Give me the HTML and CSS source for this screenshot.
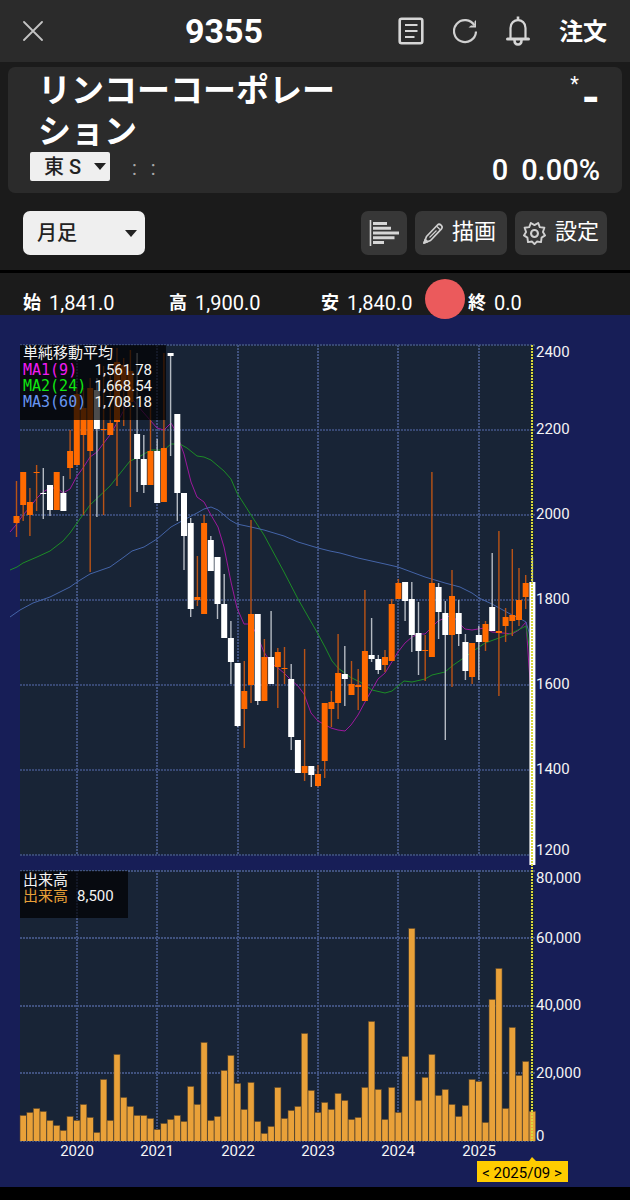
FILE: index.html
```html
<!DOCTYPE html>
<html lang="ja">
<head>
<meta charset="utf-8">
<meta name="viewport" content="width=device-width, initial-scale=1">
<title>9355 リンコーコーポレーション</title>
<link rel="stylesheet" href="styles.css">
</head>
<body>
<header class="topbar">
  <button class="icon-btn" aria-label="閉じる">
    <svg width="20" height="20" viewBox="0 0 20 20"><path d="M1 1L19 19M19 1L1 19" fill="none" stroke="#c4c4c4" stroke-width="1.8" stroke-linecap="round"/></svg>
  </button>
  <h1 class="code">9355</h1>
  <nav class="actions">
    <button class="icon-btn" aria-label="メモ">
      <svg width="26" height="28" viewBox="0 0 26 28" fill="none" stroke="#d6d6d6"><rect x="1.7" y="1.7" width="22.6" height="24.6" rx="2" stroke-width="2.6"/><path d="M7 8H19.500M7 14H19.500M7 20H16.500" stroke-width="2.2"/></svg>
    </button>
    <button class="icon-btn" aria-label="更新">
      <svg width="24" height="26" viewBox="1 1 24 24" fill="none" stroke="#d0d0d0"><path d="M22.500 7.500A11 11 0 1 0 24 13.500" stroke-width="2.200"/><path d="M24 2V9.500H16.500L19 7.600H22.500V3.500Z" fill="#d0d0d0" stroke="none"/></svg>
    </button>
    <button class="icon-btn" aria-label="通知">
      <svg width="24" height="30" viewBox="0 0 24 30" fill="none" stroke="#d6d6d6" stroke-width="2.200"><path d="M12 0.500V4" stroke-width="2.600"/><path d="M4.500 22V12C4.500 1.500 19.500 1.500 19.500 12V22"/><path d="M1.500 23H22.500" stroke-width="3" stroke-linecap="round"/><path d="M8.500 24C8.500 30 15.500 30 15.500 24" stroke-width="2.600"/></svg>
    </button>
    <button class="order-btn">注文</button>
  </nav>
</header>

<main>
  <section class="quote">
    <div class="quote-main">
      <h2 class="name">リンコーコーポレーション</h2>
      <p class="price"><sup>*</sup><span>-</span></p>
    </div>
    <div class="quote-sub">
      <label class="market">
        <select aria-label="市場"><option>東 S</option></select>
        <svg class="arrow" viewBox="0 0 12 7"><path d="M0 0H12L6 7Z" fill="#222"/></svg>
      </label>
      <p class="time"><span>:</span><span>:</span></p>
      <p class="change"><span>0</span><span>0.00%</span></p>
    </div>
  </section>

  <div class="toolbar">
    <label class="period">
      <select aria-label="足種"><option>月足</option></select>
      <svg class="arrow" viewBox="0 0 12 7"><path d="M0 0H12L6 7Z" fill="#222"/></svg>
    </label>
    <div class="tools">
      <button class="tool" aria-label="価格帯別出来高">
        <svg width="30" height="26" viewBox="0 0 30 26"><path d="M1.500 0V26" stroke="#d6d6d6" stroke-width="1.600"/><path d="M4 3.500H18M4 8.300H22M4 13H30M4 17.700H25.500M4 22.500H15" stroke="#d6d6d6" stroke-width="3"/></svg>
      </button>
      <button class="tool tool-text">
        <svg width="20" height="21" viewBox="0 0 20 21" fill="none" stroke="#d0d0d0" stroke-width="1.700" stroke-linejoin="round"><path d="M1 20L3.500 13.500L14.500 2C16.500 0 20.500 3 18.500 5.800L7.500 17.500Z"/><path d="M14 3.500L17 6.500M6.500 14.500L13.500 7.500" stroke-width="1.200"/><path d="M1 20L2.300 16.500L4.500 18.700Z" fill="#d0d0d0"/></svg>
        <span>描画</span>
      </button>
      <button class="tool tool-text">
        <svg width="23" height="23" viewBox="0 0 24 24" fill="none" stroke="#d0d0d0" stroke-width="2" stroke-linejoin="round"><path d="M12 3.200L15.800 1L17.500 5.300L22.300 6L20.800 10.400L23 14L19.400 16.300L18.800 21L14.500 20.400L12 23L9.500 20.400L5.200 21L4.600 16.300L1 14L3.200 10.400L1.700 6L6.500 5.300L8.200 1Z"/><circle cx="12" cy="12" r="3.600" stroke-width="2.200"/></svg>
        <span>設定</span>
      </button>
    </div>
  </div>

  <div class="ohlc-bar">
    <dl class="ohlc">
      <div><dt>始</dt><dd>1,841.0</dd></div>
      <div><dt>高</dt><dd>1,900.0</dd></div>
      <div><dt>安</dt><dd>1,840.0</dd></div>
      <div><dt>終</dt><dd>0.0</dd></div>
    </dl>
    <span class="touch"></span>
  </div>

  <svg class="chart" viewBox="0 315 630 872" role="img" aria-label="月足チャート">
    <rect class="panel" x="20" y="345" width="514" height="510"/>
    <rect class="panel" x="20" y="870" width="514" height="271"/>
    <g id="grid"></g>
    <g id="lines"></g>
    <g id="volume"></g>
    <g id="candles"></g>
    <g id="cursor"></g>
    <rect class="legend" x="20" y="345" width="146" height="75"/>
    <rect class="legend" x="20" y="871" width="108" height="47"/>
    <g class="txt">
      <text x="23" y="358">単純移動平均</text>
      <text class="mono ma1t" x="23" y="375">MA1(9)</text><text x="152" y="375" text-anchor="end">1,561.78</text>
      <text class="mono ma2t" x="23" y="391">MA2(24)</text><text x="152" y="391" text-anchor="end">1,668.54</text>
      <text class="mono ma3t" x="23" y="407">MA3(60)</text><text x="152" y="407" text-anchor="end">1,708.18</text>
      <text x="23" y="885">出来高</text>
      <text class="volt" x="23" y="901">出来高</text><text x="77" y="901">8,500</text>
    </g>
    <g class="txt" id="axis"></g>
    <path d="M477 1161H529L532 1157L536 1161H568V1182H477Z" fill="#ffcc00"/>
    <text class="date" x="522" y="1178" text-anchor="middle">&lt; 2025/09 &gt;</text>
  </svg>
</main>
<script src="chart.js"></script>
</body>
</html>
```

FILE: styles.css
```css
* { box-sizing: border-box; }
body {
  margin: 0;
  min-height: 100vh;
  background: #000;
  color: #fff;
  font-family: Roboto, "Noto Sans CJK JP", sans-serif;
}
h1, h2, p, dl, dd { margin: 0; }
button, select { font-family: inherit; color: inherit; border: 0; }
button { padding: 0; background: none; cursor: pointer; }
svg { display: block; }
main { padding-top: 5px; background: #1b1b1b; }

.topbar {
  display: flex;
  align-items: center;
  height: 62px;
  padding: 0 23px;
  background: #2b2b2b;
}
.code {
  flex: 1;
  padding-left: 142px;
  font-size: 34px;
  line-height: 40px;
  font-weight: 700;
}
.actions { display: flex; align-items: center; gap: 29px; }
.order-btn { padding-top: 2px; font-size: 24px; line-height: 32px; font-weight: 700; }

.quote {
  margin: 0 8px;
  padding: 3px 22px 12px;
  border-radius: 7px;
  background: #2b2b2b;
}
.quote-main { display: flex; justify-content: space-between; height: 82px; }
.name {
  max-width: 320px;
  padding-left: 8px;
  font-size: 33px;
  line-height: 41px;
  font-weight: 700;
  word-break: break-all;
}
.price { display: flex; gap: 3px; }
.price sup { font-size: 20px; vertical-align: baseline; line-height: 28px; }
.price span { padding-top: 6px; font-size: 46px; font-weight: 700; line-height: 44px; }
.quote-sub { display: flex; align-items: center; height: 29px; }
.market, .period { position: relative; display: block; }
.market select, .period select {
  appearance: none;
  width: 100%;
  height: 100%;
  background: #efefef;
  color: #222;
  font-weight: 500;
}
.market { width: 80px; height: 29px; }
.market select { padding: 0 0 0 14px; border-radius: 2px; font-size: 20px; }
.arrow { position: absolute; top: 50%; width: 12px; height: 7px; pointer-events: none; }
.market .arrow { right: 4px; margin-top: -4px; }
.time { display: flex; flex: 1; gap: 14px; padding: 2px 0 0 22px; color: #aaa; font-size: 20px; }
.change {
  display: flex;
  gap: 13px;
  padding-top: 6px;
  font-size: 29px;
  line-height: 32px;
  font-weight: 500;
}

.toolbar {
  display: flex;
  justify-content: space-between;
  padding: 18px 23px 15px;
  border-bottom: 3px solid #000;
}
.period { width: 122px; height: 44px; }
.period select { padding: 0 0 0 14px; border-radius: 7px; font-size: 20px; }
.period .arrow { right: 8px; margin-top: -3px; }
.tools { display: flex; gap: 8px; }
.tool {
  display: flex;
  align-items: center;
  gap: 9px;
  height: 44px;
  padding: 0 8px;
  border-radius: 7px;
  background: #373737;
  font-size: 22px;
}
.tool-text { min-width: 92px; }
.tool span { line-height: 30px; padding-bottom: 3px; }

.ohlc-bar { position: relative; }
.ohlc {
  display: grid;
  grid-template-columns: 146fr 152fr 147fr 162fr;
  padding: 18px 0 0 23px;
}
.ohlc div { display: flex; align-items: center; gap: 8px; height: 24px; font-size: 20px; line-height: 24px; }
.ohlc dt { font-size: 18px; font-weight: 700; }
.touch {
  position: absolute;
  left: 425px;
  top: 6px;
  width: 40px;
  height: 40px;
  border-radius: 50%;
  background: #eb5a5c;
}

.chart { width: 100%; height: auto; background: #171e57; }
.panel { fill: #182436; }
.legend { fill: #000; fill-opacity: .7; }
.txt { fill: #f4f4f4; font-size: 15px; }
.mono { font-family: "DejaVu Sans Mono", monospace; }
.ma1t { fill: #f01cf0; }
.ma2t { fill: #10e810; }
.ma3t { fill: #6896f0; }
.volt { fill: #e8a038; }
.date { fill: #000; font-size: 15px; }
.grid-line { stroke: #40527f; stroke-width: 2; stroke-dasharray: 2 1; }
.grid-thin { stroke: #384974; }
.ma { fill: none; stroke-width: 1; }
.ma1 { stroke: #9c189c; }
.ma2 { stroke: #1c8c26; }
.ma3 { stroke: #4464a8; }
.vol { fill: #e9a139; }
.vol-edge { fill: #6d532f; }
.up { fill: #ff6a00; }
.up-wick { fill: #b95316; }
.down { fill: #fff; }
.down-wick { fill: #b4bac2; }
.cursor-line { stroke: #d9d83c; stroke-width: 2; stroke-dasharray: 2 1; }
```

FILE: chart.js
```js
const NS = 'http://www.w3.org/2000/svg';
const STEP = 6.7, X0 = 16.5, BASE = 1141;
const xAt = i => X0 + i * STEP;

function add(parent, tag, attrs, text) {
  const el = document.createElementNS(NS, tag);
  for (const k in attrs) el.setAttribute(k, attrs[k]);
  if (text) el.textContent = text;
  document.getElementById(parent).appendChild(el);
}
function line(parent, x1, y1, x2, y2, cls) {
  add(parent, 'line', { x1, y1, x2, y2, class: cls });
}

// One candle per month from 2019/04: direction, high, body top, body bottom, low
const candles = [
  ['u',481,516,523,537],['u',472,472,505,521],['u',488,502,515,536],['u',465,472,473,511],
  ['d',468,493,494,519],['d',485,485,510,516],['u',472,472,510,510],['d',476,493,511,511],
  ['u',430,451,468,479],['u',388,394,465,465],['u',388,408,435,515],['u',378,388,451,572],
  ['d',378,390,429,517],['u',366,429,430,515],['u',365,423,435,435],['u',348,362,422,486],
  ['u',358,365,388,426],['u',350,371,402,507],['d',353,434,459,492],['d',435,459,485,493],
  ['u',402,451,485,485],['d',439,451,503,503],['u',353,448,502,502],['d',353,353,356,456],
  ['d',414,414,493,521],['d',493,493,536,570],['d',518,523,609,617],['u',556,597,600,606],
  ['u',515,523,614,614],['d',536,540,571,571],['d',557,557,604,619],['d',574,604,638,638],
  ['d',621,638,662,684],['d',663,663,726,727],['u',661,691,709,748],['u',520,614,685,703],
  ['d',614,614,701,705],['u',639,657,701,701],['d',611,657,684,684],['u',648,652,667,708],
  ['u',647,668,669,684],['d',664,679,737,750],['d',740,740,773,773],['u',649,766,773,781],
  ['d',766,766,775,787],['u',765,774,786,787],['u',703,703,761,778],['u',691,702,709,727],
  ['u',634,673,703,719],['d',646,674,679,706],['u',661,684,695,695],['u',669,685,687,710],
  ['u',590,651,701,701],['d',618,655,659,662],['d',655,659,670,674],['u',650,657,665,672],
  ['u',599,604,661,661],['u',579,583,599,599],['d',582,582,601,621],['d',582,599,635,652],
  ['d',602,633,651,675],['u',635,650,651,681],['u',472,583,657,657],['d',583,587,612,639],
  ['d',601,613,635,740],['u',570,596,635,687],['d',600,613,634,646],['d',634,642,671,680],
  ['u',643,643,677,684],['d',626,635,642,680],['u',621,624,642,651],['d',553,607,631,631],
  ['u',531,631,633,696],['u',608,617,626,642],['u',549,615,621,636],['u',568,600,620,626],
  ['u',575,583,597,609],['d',557,582,865,865]
];

// Bar tops for the volume panel, from 2019/05
const volume = [1116,1113,1109,1112,1121,1126,1131,1117,1121,1105,1118,1133,1080,1121,1055,
  1098,1107,1116,1116,1119,1130,1124,1120,1116,1122,1087,1105,1043,1121,1117,1071,1056,1084,
  1110,1083,1122,1134,1127,1088,1119,1111,1107,1034,1091,1113,1103,1110,1094,1101,1120,1118,
  1088,1022,1090,1120,1088,1113,1057,929,1101,1078,1055,1096,1090,1105,1117,1106,1080,1082,
  1123,1000,969,1109,1028,1076,1062,1112];

const averages = {
  ma1: '10,532 16,525 23,515 30,507 37,498 43,492 50,488 57,488 63,493 70,489 77,476 83,468 90,457 97,452 103,444 110,435 117,423 124,410 133,400 143,412 150,420 157,428 164,430 171,423 175,430 180,443 184,454 191,482 197,497 204,502 211,515 218,527 224,547 231,582 237,608 244,624 251,624 257,635 264,652 271,663 278,668 284,673 291,680 298,686 304,694 311,713 318,721 331,728 338,730 345,731 351,725 358,715 365,702 378,679 385,673 398,652 405,643 412,637 418,634 425,634 438,621 445,618 452,615 458,622 465,629 472,630 478,629 485,628 492,632 503,633 512,634 519,630 526,622 529,667 532,705',
  ma2: '10,570 17,567 23,563 37,557 50,551 63,541 70,533 77,523 90,505 110,486 130,461 137,458 151,450 164,450 171,444 180,444 187,448 197,456 204,457 211,460 224,471 231,479 237,493 251,515 264,535 284,572 298,599 318,634 325,647 332,661 338,668 350,677 360,682 372,690 385,693 392,691 404,681 412,682 425,679 432,675 445,672 452,666 465,657 472,652 485,643 499,638 512,633 526,626 529,645 532,665',
  ma3: '10,617 20,610 33,603 50,597 70,587 77,582 90,574 110,567 124,557 132,551 144,547 157,539 171,527 180,522 197,513 204,509 211,507 218,510 230,520 237,524 251,527 264,530 284,536 298,542 318,548 330,551 340,553 358,558 385,564 398,567 425,577 445,583 460,587 472,593 479,598 492,604 512,615 519,618 526,622 529,632 532,648'
};

[345, 430, 515, 600, 685, 770, 855].forEach(y => line('grid', 20, y, 535, y, 'grid-line grid-thin'));
[871, 938, 1006, 1073, 1141].forEach(y => line('grid', 20, y, 535, y, 'grid-line'));
['2020', '2021', '2022', '2023', '2024', '2025'].forEach((year, n) => {
  const x = Math.round(xAt(9 + 12 * n));
  line('grid', x, 345, x, 855, 'grid-line');
  line('grid', x, 870, x, BASE, 'grid-line');
  add('axis', 'text', { x, y: 1156, 'text-anchor': 'middle' }, year);
});

for (const key in averages) add('lines', 'polyline', { points: averages[key], class: 'ma ' + key });

volume.forEach((top, n) => {
  const x = xAt(n + 1);
  add('volume', 'rect', { x: x - 3.4, y: top - 1, width: 6.8, height: BASE - top + 1, class: 'vol-edge' });
  add('volume', 'rect', { x: x - 2.8, y: top, width: 5.6, height: BASE - top, class: 'vol' });
});

candles.forEach(([dir, high, top, bottom, low], i) => {
  const x = xAt(i), cls = dir === 'u' ? 'up' : 'down';
  add('candles', 'rect', { x: x - 0.7, y: high, width: 1.4, height: low - high, class: cls + '-wick' });
  add('candles', 'rect', { x: x - 3, y: top, width: 6, height: bottom - top, class: cls });
});

line('cursor', 532, 345, 532, BASE, 'cursor-line');

[['2400', 357], ['2200', 434], ['2000', 519], ['1800', 604], ['1600', 689], ['1400', 774], ['1200', 855],
 ['80,000', 883], ['60,000', 943], ['40,000', 1010], ['20,000', 1078], ['0', 1141]]
  .forEach(([label, y]) => add('axis', 'text', { x: 536, y }, label));
```
